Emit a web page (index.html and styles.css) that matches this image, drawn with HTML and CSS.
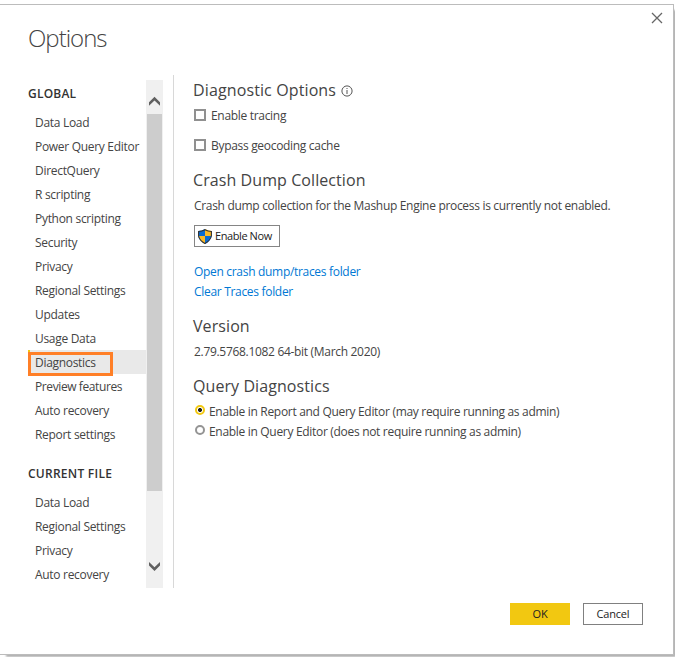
FILE: index.html
```
<!DOCTYPE html>
<html lang="en">
<head>
<meta charset="utf-8">
<title>Options</title>
<link rel="stylesheet" href="styles.css">
</head>
<body>
<div class="dialog">
  <button class="close" aria-label="Close"><svg width="12" height="12" viewBox="0 0 12 12"><path d="M1 1l10 10M11 1L1 11"/></svg></button>
  <h1>Options</h1>
  <div class="body">
    <nav>
      <h2>GLOBAL</h2>
      <ul>
        <li>Data Load</li>
        <li>Power Query Editor</li>
        <li>DirectQuery</li>
        <li>R scripting</li>
        <li>Python scripting</li>
        <li>Security</li>
        <li>Privacy</li>
        <li>Regional Settings</li>
        <li>Updates</li>
        <li>Usage Data</li>
        <li class="selected">Diagnostics</li>
        <li class="tight">Preview features</li>
        <li>Auto recovery</li>
        <li>Report settings</li>
      </ul>
      <h2 class="second">CURRENT FILE</h2>
      <ul>
        <li>Data Load</li>
        <li>Regional Settings</li>
        <li>Privacy</li>
        <li>Auto recovery</li>
      </ul>
    </nav>
    <div class="scrollbar">
      <svg width="17" height="34" viewBox="0 0 17 34"><path d="M3 22.200L8.500 16.700L14 22.200V25.800L8.500 20.600L3 25.800z"/></svg>
      <div class="thumb"></div>
      <svg class="down" width="17" height="34" viewBox="0 0 17 34"><path d="M3 8L8.500 13.200L14 8V11.600L8.500 17.100L3 11.600z"/></svg>
    </div>
    <main>
      <h3 class="first"><span>Diagnostic Options</span><svg class="info" width="12" height="12" viewBox="0 0 12 12"><circle cx="6" cy="6" r="5.100"/><path d="M6 5v4M6 3v1"/></svg></h3>
      <div class="row"><i class="check"></i><span>Enable tracing</span></div>
      <div class="row gap"><i class="check"></i><span>Bypass geocoding cache</span></div>
      <h3>Crash Dump Collection</h3>
      <p>Crash dump collection for the Mashup Engine process is currently not enabled.</p>
      <button class="enable"><svg width="14" height="15" viewBox="0 0 14 15"><path class="blue" d="M7 0Q4 2 0 2V7Q1 12 7 15V7.500z"/><path class="gold" d="M7 0Q10 2 14 2V7H7z"/><path class="gold" d="M0.500 7H7V15Q1.500 12 0.500 7z"/><path class="blue" d="M7 7H13.500Q12.500 12 7 15z"/><path class="edge" d="M7 .7Q4 2.400 .6 2.500V7Q1.500 11.500 7 14.400Q12.500 11.500 13.400 7V2.500Q10 2.400 7 .7z"/></svg><span>Enable Now</span></button>
      <a>Open crash dump/traces folder</a>
      <a>Clear Traces folder</a>
      <h3>Version</h3>
      <p>2.79.5768.1082 64-bit (March 2020)</p>
      <h3>Query Diagnostics</h3>
      <div class="row"><i class="radio on"></i><span>Enable in Report and Query Editor (may require running as admin)</span></div>
      <div class="row next"><i class="radio"></i><span>Enable in Query Editor (does not require running as admin)</span></div>
    </main>
  </div>
  <footer><button class="ok">OK</button><button class="cancel">Cancel</button></footer>
</div>
</body>
</html>
```
FILE: styles.css
```
*, *::before, *::after { box-sizing: border-box; }
body {
  margin: 0;
  height: 657px;
  padding-top: 4px;
  overflow: hidden;
  background: #fff;
  color: #444;
  font: 12px/20px "Open Sans", "Noto Sans", sans-serif;
  letter-spacing: -0.31px;
}
h1, h2, h3, p, ul { margin: 0; padding: 0; font-weight: 400; }
ul { list-style: none; }
button { font: inherit; letter-spacing: inherit; padding: 0; border: 0; background: none; color: #222; }
svg { display: block; fill: none; }
.dialog {
  position: relative;
  width: 674px;
  height: 651px;
  padding: 19px 30px 0 28px;
  border: solid #bcbcbc;
  border-width: 1px 1px 1px 0;
  box-shadow: 4px 4px 2px -2px #b0b0b0;
  background: #fff;
}
.close { position: absolute; right: 10px; top: 7px; }
.close path { stroke: #666; stroke-width: 1.3; }
h1 { height: 51px; font-size: 24px; line-height: 28px; font-weight: 300; letter-spacing: -1px; }
.body { display: flex; height: 513px; }
nav { width: 118px; padding-top: 9px; letter-spacing: -0.3px; }
h2 { height: 26px; line-height: 20px; font-weight: 600; font-size: 12px; color: #333; white-space: nowrap; letter-spacing: 0.2px; }
.second { margin-top: 18px; letter-spacing: 0.25px; }
li { height: 24px; padding-left: 7px; line-height: 25px; white-space: nowrap; }
.tight { letter-spacing: -0.4px; }
.selected { position: relative; background: #e9e9e9; box-shadow: inset 2px 0 #f2c811; }
.selected::before { content: ""; position: absolute; left: 0; top: 2px; width: 85px; height: 24px; border: 3px solid #ff7f27; }
.scrollbar { width: 17px; height: 508px; margin-top: 5px; background: #f0f0f0; display: flex; flex-direction: column; }
.scrollbar path { fill: #606060; }
.thumb { height: 377px; margin: 0 1px; background: #cdcdcd; }
.down { margin-top: auto; }
main { flex: 1; margin-left: 10px; padding-left: 19px; border-left: 1px solid #d8d8d8; display: flex; flex-direction: column; align-items: flex-start; white-space: nowrap; }
h3 { height: 24px; margin-top: 12px; font-size: 16px; line-height: 24px; letter-spacing: 0.08px; }
.first { display: flex; align-items: center; gap: 5px; margin-top: 3px; letter-spacing: 0.12px; }
.info { stroke: #555; margin-top: 1px; }
.row { display: flex; align-items: center; height: 20px; margin-top: 4px; }
.gap { margin-top: 10px; }
.check { width: 12px; height: 12px; margin: 0 5px 2px 1px; border: 2px solid #909090; }
p { margin: 4px 0 0 1px; }
.enable { display: flex; align-items: center; width: 86px; height: 22px; margin: 9px 0 15px 1px; padding-left: 3px; gap: 3px; border: 1px solid #858585; font-size: 11px; letter-spacing: -0.42px; }
.blue { fill: #0b6bd3; }
.gold { fill: #fcb928; }
.edge { stroke: #333; stroke-width: 1.1; }
a { margin-left: 1px; color: #0078d4; }
.radio { width: 10px; height: 10px; margin: 0 4px 4px 2px; border: 2px solid #949494; border-radius: 50%; }
.radio.on { border-color: #f2c811; background: radial-gradient(circle, #222 1.7px, #fff 2.3px); }
.next { margin-top: 0; }
footer { display: flex; justify-content: flex-end; gap: 13px; margin-top: 10px; padding-top: 5px; }
footer button { width: 60px; height: 22px; font-size: 11px; letter-spacing: -0.2px; }
.ok { background: #f2c811; }
.cancel { border: 1px solid #808080; }
```
